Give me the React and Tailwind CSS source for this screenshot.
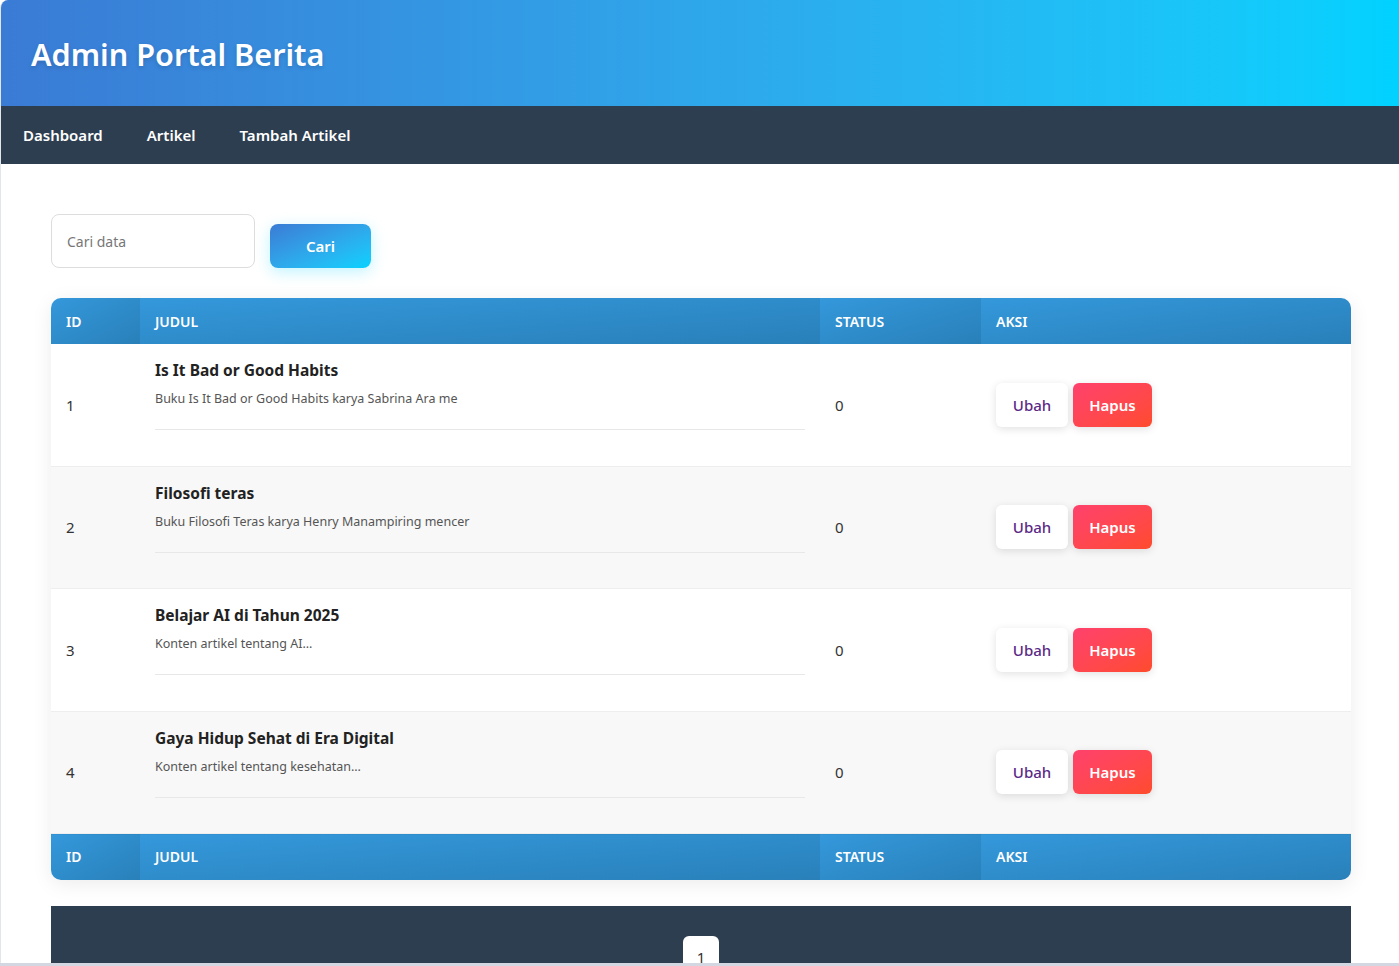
import React from 'react';

const articles = [
    { id: 1, title: 'Is It Bad or Good Habits', desc: 'Buku Is It Bad or Good Habits karya Sabrina Ara me', status: 0 },
    { id: 2, title: 'Filosofi teras', desc: 'Buku Filosofi Teras karya Henry Manampiring mencer', status: 0 },
    { id: 3, title: 'Belajar AI di Tahun 2025', desc: 'Konten artikel tentang AI...', status: 0 },
    { id: 4, title: 'Gaya Hidup Sehat di Era Digital', desc: 'Konten artikel tentang kesehatan...', status: 0 },
];

const thClass = 'bg-gradient-to-br from-[#3498db] to-[#2980b9] text-white text-left text-[14px] font-semibold uppercase px-[15px] h-[46px]';

const HeadRow = () => (
    <tr>
        <th className={`${thClass} w-[89px]`}>ID</th>
        <th className={`${thClass} w-[680px]`}>Judul</th>
        <th className={`${thClass} w-[161px]`}>Status</th>
        <th className={thClass}>Aksi</th>
    </tr>
);

const App = () => {
    return (
        <div className="min-h-screen bg-white border-l border-[#e3e5ea] rounded-tl-lg overflow-hidden font-['Noto_Sans','Open_Sans',sans-serif] text-[#333]">
            {/* Header */}
            <header className="h-[106px] flex items-center px-[30px] bg-gradient-to-r from-[#3a7bd5] to-[#00d2ff]">
                <h1 className="text-white text-[30.6px] font-semibold [text-shadow:0_2px_4px_rgba(0,0,0,0.15)] mt-[3px]">
                    Admin Portal Berita
                </h1>
            </header>

            {/* Nav */}
            <nav className="h-[58px] bg-[#2d3e50] flex items-center">
                {['Dashboard', 'Artikel', 'Tambah Artikel'].map((item) => (
                    <a key={item} href="#" className="px-[22px] text-white text-[15px] font-semibold">
                        {item}
                    </a>
                ))}
            </nav>

            <main className="pl-[50px] pt-[50px]">
                {/* Search */}
                <div className="flex items-end gap-[15px]">
                    <input
                        type="text"
                        placeholder="Cari data"
                        className="w-[204px] h-[54px] border border-[#dddddd] rounded-lg px-[15px] text-[14px] placeholder:text-[#777] outline-none"
                    />
                    <button className="w-[101px] h-[44px] rounded-lg text-white text-[15px] font-semibold bg-gradient-to-br from-[#3a7bd5] to-[#00d2ff] shadow-[0_4px_15px_rgba(0,210,255,0.25)]">
                        Cari
                    </button>
                </div>

                {/* Table */}
                <div className="w-[1300px] mt-[30px] rounded-[10px] overflow-hidden shadow-[0_4px_20px_rgba(0,0,0,0.08)]">
                    <table className="w-full border-collapse">
                        <thead>
                            <HeadRow />
                        </thead>
                        <tbody>
                            {articles.map((a, i) => (
                                <tr key={a.id} className={`border-b border-[#eeeeee] ${i % 2 === 1 ? 'bg-[#f8f8f8]' : 'bg-white'}`}>
                                    <td className="px-[15px] text-[15px] align-middle">{a.id}</td>
                                    <td className="px-[15px] pt-[15px] pb-[15px]">
                                        <div className="border-b border-[#e8e8e8] pb-[21px] mb-[20.5px]">
                                            <h3 className="text-[15.5px] font-bold text-[#222] leading-[22px]">{a.title}</h3>
                                            <p className="text-[12.5px] text-[#555] mt-[9px] leading-[18px]">{a.desc}</p>
                                        </div>
                                    </td>
                                    <td className="px-[15px] text-[15px]">{a.status}</td>
                                    <td className="px-[15px]">
                                        <div className="flex gap-[5px]">
                                            <button className="w-[72px] h-[44px] rounded-md bg-white text-[#5b2a86] text-[15px] font-medium shadow-[0_2px_8px_rgba(0,0,0,0.12)]">
                                                Ubah
                                            </button>
                                            <button className="w-[79px] h-[44px] rounded-md text-white text-[15px] font-semibold bg-gradient-to-br from-[#ff416c] to-[#ff4b2b] shadow-[0_2px_8px_rgba(0,0,0,0.12)]">
                                                Hapus
                                            </button>
                                        </div>
                                    </td>
                                </tr>
                            ))}
                        </tbody>
                        <tfoot>
                            <HeadRow />
                        </tfoot>
                    </table>
                </div>

                {/* Pagination */}
                <div className="w-[1300px] mt-[26px] bg-[#2d3e50] h-[120px] flex justify-center pt-[30px]">
                    <span className="w-[36px] h-[44px] bg-white rounded-md flex justify-center text-[15px] text-[#333] pt-[14px] leading-none">
                        1
                    </span>
                </div>
            </main>

            <div className="fixed bottom-0 left-0 right-0 h-[3px] bg-[#d3d7e2]" />
        </div>
    );
};

export default App;
